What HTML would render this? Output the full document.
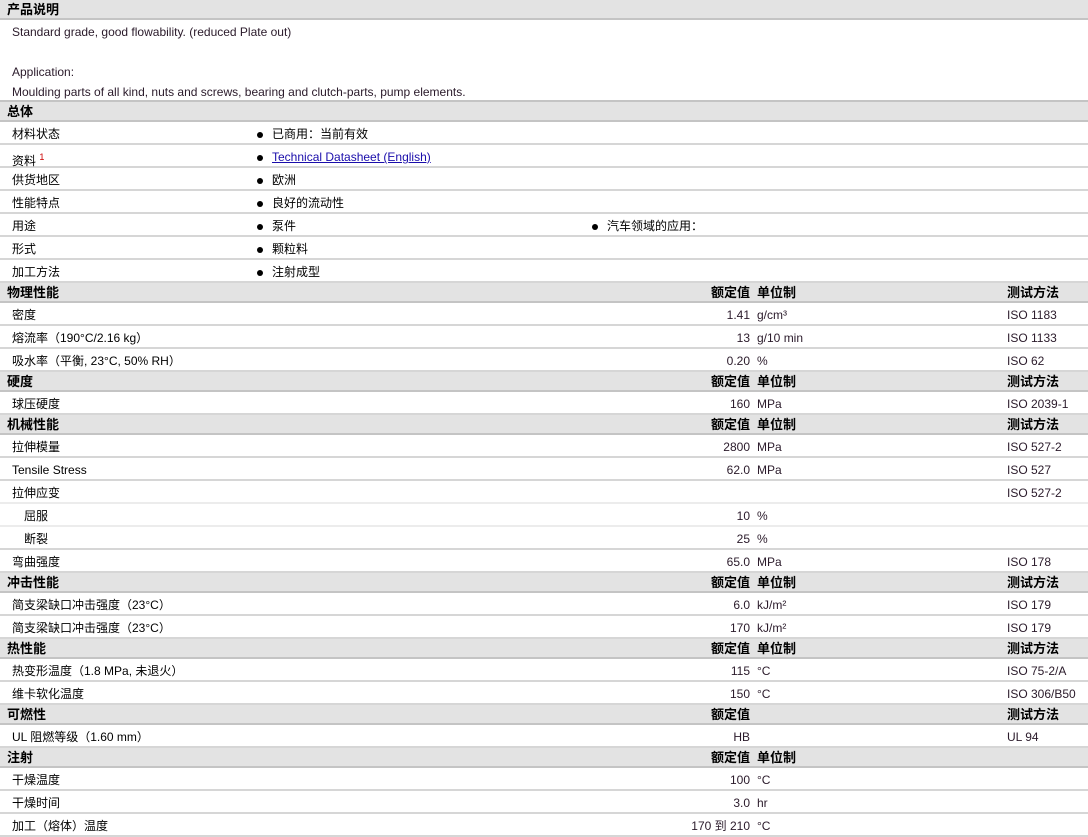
<!DOCTYPE html>
<html><head><meta charset="utf-8"><style>
*{margin:0;padding:0;box-sizing:border-box}
body{width:1088px;height:835px;overflow:hidden;background:#fff;font-family:"Liberation Sans","Noto Sans CJK SC",sans-serif;font-size:12px;color:#2a1a2a}
.h{height:20px;background:#e3e3e3;border-bottom:2px solid #c4c4c4;position:relative;font-weight:bold;font-size:13px;color:#000}
.h span{position:absolute;top:2px;line-height:15px}
.r{height:23px;border-bottom:2px solid #d6d6d6;position:relative}
.r.s{border-bottom:2px solid #ececec}
.r span{position:absolute;top:5px;line-height:15px;white-space:nowrap}
.l{left:12px;color:#000}
.v{right:338px;text-align:right}
.u{left:757px}
.t{left:1007px}
.b{left:272px;color:#000}
.b::before{content:"";position:absolute;left:-15px;top:5px;width:6px;height:6px;border-radius:50%;background:#000}
.b2{left:607px;color:#000}
.b2::before{content:"";position:absolute;left:-15px;top:5px;width:6px;height:6px;border-radius:50%;background:#000}
.hv{right:338px}.hu{left:757px}.ht{left:1007px}
a{color:#1a0dab;text-decoration:underline}
.d{height:82px;border-bottom:2px solid #c4c4c4;position:relative}
.d div{position:absolute;left:12px;line-height:15px}
</style></head><body>
<div class="h"><span style="left:7px">产品说明</span></div>
<div class="d"><div style="top:5px">Standard grade, good flowability. (reduced Plate out)</div><div style="top:45px">Application:</div><div style="top:65px">Moulding parts of all kind, nuts and screws, bearing and clutch-parts, pump elements.</div></div>
<div class="h"><span style="left:7px">总体</span></div>
<div class="r"><span class="l">材料状态</span><span class="b">已商用：当前有效</span></div>
<div class="r"><span class="l">资料 <sup style="font-size:9px;color:#c00">1</sup></span><span class="b"><a>Technical Datasheet (English)</a></span></div>
<div class="r"><span class="l">供货地区</span><span class="b">欧洲</span></div>
<div class="r"><span class="l">性能特点</span><span class="b">良好的流动性</span></div>
<div class="r"><span class="l">用途</span><span class="b">泵件</span><span class="b2">汽车领域的应用：</span></div>
<div class="r"><span class="l">形式</span><span class="b">颗粒料</span></div>
<div class="r"><span class="l">加工方法</span><span class="b">注射成型</span></div>
<div class="h"><span style="left:7px">物理性能</span><span class="hv">额定值</span><span class="hu">单位制</span><span class="ht">测试方法</span></div>
<div class="r"><span class="l">密度</span><span class="v">1.41</span><span class="u">g/cm³</span><span class="t">ISO 1183</span></div>
<div class="r"><span class="l">熔流率（190°C/2.16 kg）</span><span class="v">13</span><span class="u">g/10 min</span><span class="t">ISO 1133</span></div>
<div class="r"><span class="l">吸水率（平衡, 23°C, 50% RH）</span><span class="v">0.20</span><span class="u">%</span><span class="t">ISO 62</span></div>
<div class="h"><span style="left:7px">硬度</span><span class="hv">额定值</span><span class="hu">单位制</span><span class="ht">测试方法</span></div>
<div class="r"><span class="l">球压硬度</span><span class="v">160</span><span class="u">MPa</span><span class="t">ISO 2039-1</span></div>
<div class="h"><span style="left:7px">机械性能</span><span class="hv">额定值</span><span class="hu">单位制</span><span class="ht">测试方法</span></div>
<div class="r"><span class="l">拉伸模量</span><span class="v">2800</span><span class="u">MPa</span><span class="t">ISO 527-2</span></div>
<div class="r"><span class="l">Tensile Stress</span><span class="v">62.0</span><span class="u">MPa</span><span class="t">ISO 527</span></div>
<div class="r s"><span class="l">拉伸应变</span><span class="t">ISO 527-2</span></div>
<div class="r s"><span class="l" style="left:24px">屈服</span><span class="v">10</span><span class="u">%</span></div>
<div class="r"><span class="l" style="left:24px">断裂</span><span class="v">25</span><span class="u">%</span></div>
<div class="r"><span class="l">弯曲强度</span><span class="v">65.0</span><span class="u">MPa</span><span class="t">ISO 178</span></div>
<div class="h"><span style="left:7px">冲击性能</span><span class="hv">额定值</span><span class="hu">单位制</span><span class="ht">测试方法</span></div>
<div class="r"><span class="l">简支梁缺口冲击强度（23°C）</span><span class="v">6.0</span><span class="u">kJ/m²</span><span class="t">ISO 179</span></div>
<div class="r"><span class="l">简支梁缺口冲击强度（23°C）</span><span class="v">170</span><span class="u">kJ/m²</span><span class="t">ISO 179</span></div>
<div class="h"><span style="left:7px">热性能</span><span class="hv">额定值</span><span class="hu">单位制</span><span class="ht">测试方法</span></div>
<div class="r"><span class="l">热变形温度（1.8 MPa, 未退火）</span><span class="v">115</span><span class="u">°C</span><span class="t">ISO 75-2/A</span></div>
<div class="r"><span class="l">维卡软化温度</span><span class="v">150</span><span class="u">°C</span><span class="t">ISO 306/B50</span></div>
<div class="h"><span style="left:7px">可燃性</span><span class="hv">额定值</span><span class="ht">测试方法</span></div>
<div class="r"><span class="l">UL 阻燃等级（1.60 mm）</span><span class="v">HB</span><span class="t">UL 94</span></div>
<div class="h"><span style="left:7px">注射</span><span class="hv">额定值</span><span class="hu">单位制</span></div>
<div class="r"><span class="l">干燥温度</span><span class="v">100</span><span class="u">°C</span></div>
<div class="r"><span class="l">干燥时间</span><span class="v">3.0</span><span class="u">hr</span></div>
<div class="r"><span class="l">加工（熔体）温度</span><span class="v">170 到 210</span><span class="u">°C</span></div>
</body></html>
